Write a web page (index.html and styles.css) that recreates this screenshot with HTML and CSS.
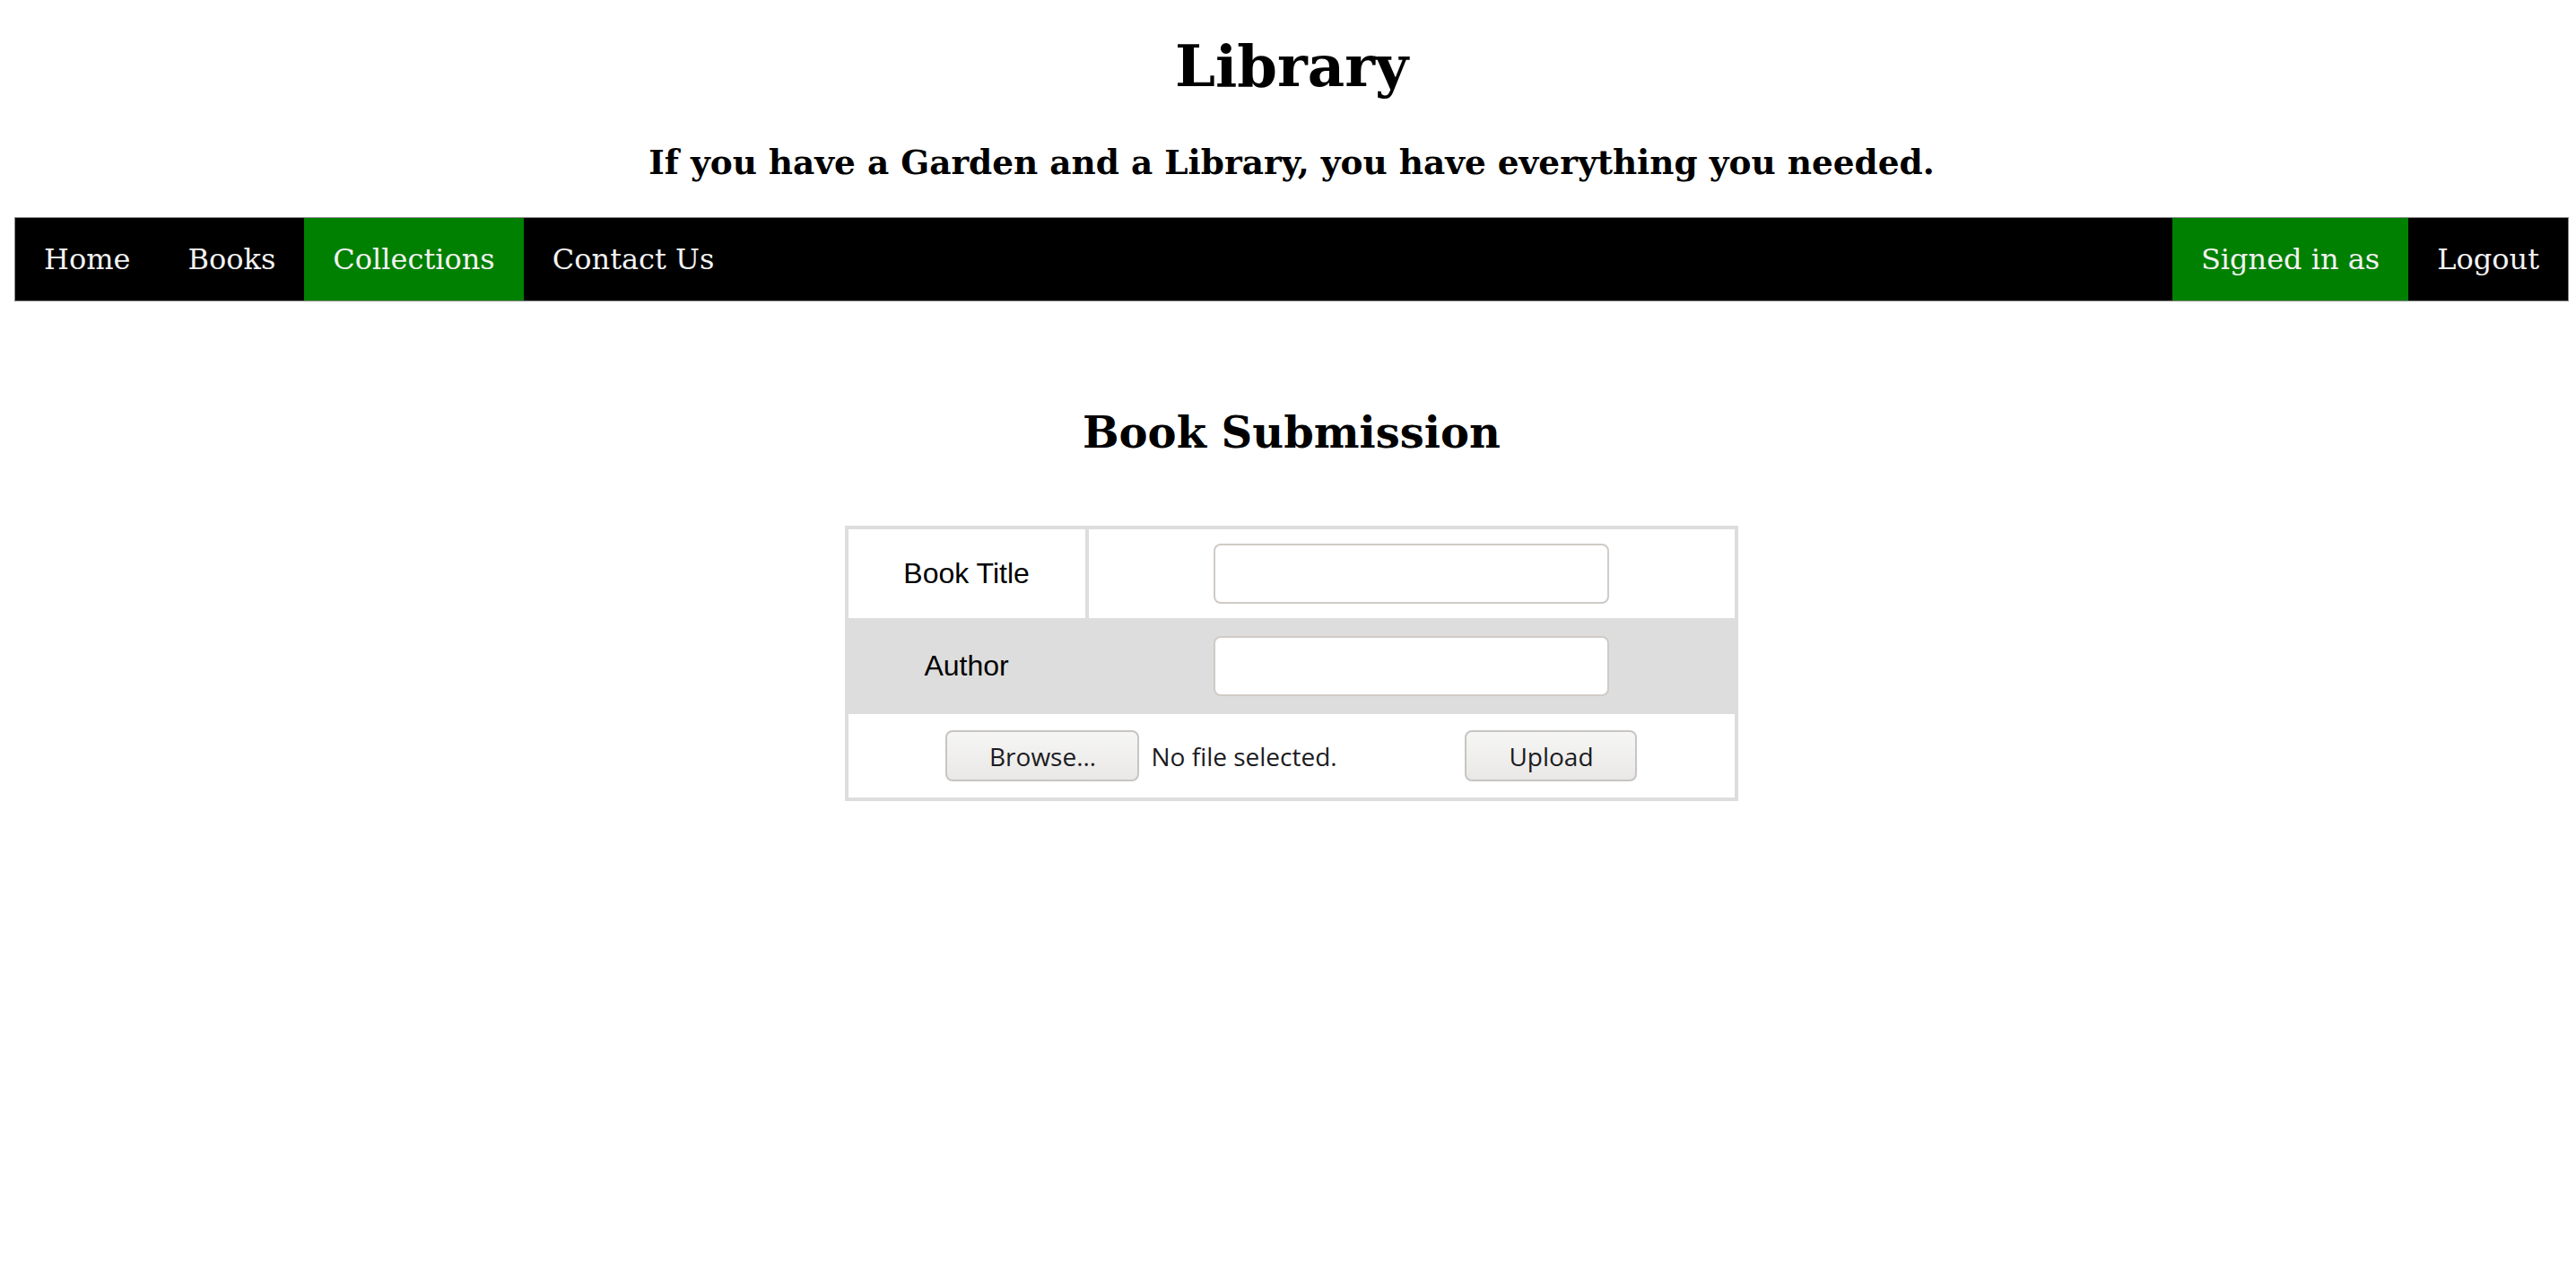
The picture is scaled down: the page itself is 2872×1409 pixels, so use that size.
FILE: index.html
```html
<!DOCTYPE html>
<html lang="en">
<head>
<meta charset="utf-8">
<title>Library - Book Submission</title>
<link rel="stylesheet" href="styles.css">
</head>
<body>
<header class="masthead">
  <h1 class="site-title">Library</h1>
  <h3 class="tagline">If you have a Garden and a Library, you have everything you needed.</h3>
</header>
<nav class="topnav">
  <ul class="nav-list">
    <li class="nav-item"><a class="nav-link" href="#">Home</a></li>
    <li class="nav-item"><a class="nav-link" href="#">Books</a></li>
    <li class="nav-item active"><a class="nav-link" href="#">Collections</a></li>
    <li class="nav-item"><a class="nav-link" href="#">Contact Us</a></li>
    <li class="nav-item active nav-right"><a class="nav-link" href="#">Signed in as</a></li>
    <li class="nav-item"><a class="nav-link" href="#">Logout</a></li>
  </ul>
</nav>
<main class="content">
  <h2 class="page-heading">Book Submission</h2>
  <form class="submit-form" action="#">
    <table class="submit-table">
      <tr class="row-light">
        <td class="field-label">Book Title</td>
        <td class="field-input"><input class="text-input" type="text" name="title"></td>
      </tr>
      <tr class="row-shaded">
        <td class="field-label">Author</td>
        <td class="field-input"><input class="text-input" type="text" name="author"></td>
      </tr>
      <tr class="row-light row-last">
        <td class="file-cell" colspan="2">
          <div class="file-row">
            <span class="file-picker">
              <button class="ui-button browse-button" type="button">Browse…</button>
              <span class="file-name">No file selected.</span>
            </span>
            <button class="ui-button upload-button" type="submit">Upload</button>
          </div>
        </td>
      </tr>
    </table>
  </form>
</main>
</body>
</html>
```

FILE: styles.css
```css
* {
  box-sizing: border-box;
}

html,
body {
  background: #ffffff;
}

body {
  margin: 0 8px 0 16px;
  font-family: "DejaVu Serif", serif;
  color: #000000;
}

.masthead {
  text-align: center;
}

.site-title {
  font-size: 64px;
  font-weight: bold;
  line-height: normal;
  margin: 36px 0 48px;
}

.tagline {
  font-size: 37.44px;
  font-weight: bold;
  line-height: normal;
  margin: 0 0 39px;
}

.nav-list {
  list-style: none;
  margin: 0;
  padding: 0;
  display: flex;
  background: #000000;
  border: 1px solid #8a8a8a;
}

.nav-link {
  display: block;
  padding: 28px 32px;
  font-size: 32px;
  line-height: 36px;
  color: #f2f2f2;
  text-decoration: none;
}

.nav-item.active .nav-link {
  background: #008000;
}

.nav-right {
  margin-left: auto;
}

.content {
  padding-top: 118px;
  text-align: center;
}

.page-heading {
  font-size: 48px;
  font-weight: bold;
  line-height: normal;
  margin: 0 0 76px;
}

.submit-form {
  margin: 0;
}

.submit-table {
  width: 35%;
  margin: 0 auto;
  border-collapse: separate;
  border-spacing: 0;
  border: 4px solid #dddddd;
  font-family: "Liberation Sans", Arial, sans-serif;
  font-size: 32px;
}

.submit-table td {
  padding: 16px;
  border-bottom: 4px solid #dddddd;
  text-align: center;
  vertical-align: middle;
}

.submit-table .field-label {
  width: 268px;
  border-right: 4px solid #dddddd;
}

.row-shaded td {
  background: #dddddd;
}

.submit-table .row-last td {
  border-bottom: 0;
  padding: 18px 16px;
}

.text-input {
  display: inline-block;
  width: 441px;
  height: 67px;
  border: 2px solid #d0cbc6;
  border-radius: 8px;
  background: #ffffff;
  font-size: 28px;
  padding: 4px 10px;
  vertical-align: middle;
}

.file-row {
  display: flex;
  justify-content: center;
  align-items: center;
  gap: 12px;
}

.file-picker {
  display: inline-flex;
  align-items: center;
  gap: 13px;
  width: 567px;
}

.ui-button {
  height: 57px;
  padding: 0;
  font-family: "Open Sans", "Noto Sans", sans-serif;
  font-size: 28px;
  color: #1c1b22;
  background: linear-gradient(#f6f6f5, #e9e8e6);
  border: 2px solid #c8c5c2;
  border-radius: 8px;
  line-height: 1;
}

.browse-button {
  width: 216px;
}

.upload-button {
  width: 192px;
}

.file-name {
  font-family: "Open Sans", "Noto Sans", sans-serif;
  font-size: 28px;
  color: #1c1b22;
  white-space: nowrap;
}
```
